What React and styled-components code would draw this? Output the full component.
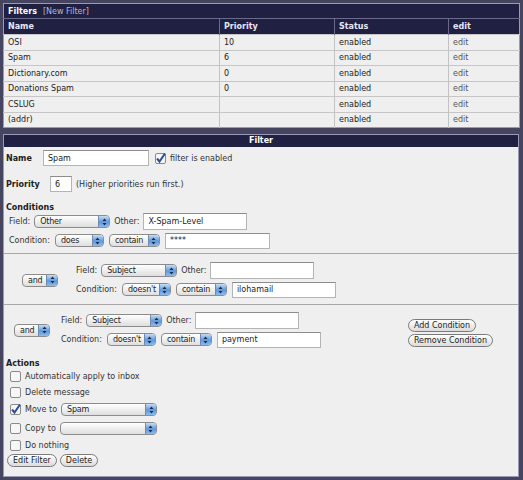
import React from 'react';
import styled, { createGlobalStyle } from 'styled-components';

const Global = createGlobalStyle`
  html, body { margin: 0; padding: 0; background: #46455f; }
  body { font-family: "DejaVu Sans", Verdana, sans-serif; font-size: 8px; color: #222; }
  #root { padding: 3px 4px 3px 3px; }
`;

const Table = styled.table`
  width: 516px;
  border-collapse: collapse;
  border: 1px solid #9a9ab8;
  background: #efefef;
  table-layout: fixed;
`;

const Caption = styled.th`
  background: #1f2042;
  color: #fff;
  text-align: left;
  font-weight: bold;
  height: 14px;
  padding: 0 4px;
  span { font-weight: normal; color: #b8b8d4; margin-left: 6px; }
`;

const HeadCell = styled.th`
  background: #1f2042;
  color: #e8e8f4;
  text-align: left;
  font-weight: bold;
  height: 15px;
  padding: 0 4px;
  border-left: 1px solid #6a6a8c;
  border-top: 1px solid #6a6a8c;
  &:first-child { border-left: none; }
`;

const Cell = styled.td`
  height: 14.5px;
  padding: 0 4px;
  border-top: 1px solid #c6c6c6;
  border-left: 1px solid #c2c2c2;
  color: ${p => (p.$muted ? '#555' : '#222')};
  &:first-child { border-left: none; }
`;

const Panel = styled.div`
  margin-top: 6px;
  width: 514px;
  height: 341px;
  border: 1px solid #9a9ab8;
  background: #efefef;
  display: flex;
  flex-direction: column;
`;

const PanelHead = styled.div`
  background: #1f2042;
  color: #fff;
  font-weight: bold;
  text-align: center;
  height: 12px;
  line-height: 12px;
`;

const Row = styled.div`
  display: flex;
  align-items: center;
  gap: ${p => p.$gap ?? 4}px;
  margin-top: ${p => p.$top ?? 0}px;
  padding-left: ${p => p.$left ?? 0}px;
  height: ${p => p.$h ?? 17}px;
`;

const Bold = styled.span`
  font-weight: bold;
  width: ${p => (p.$w ? `${p.$w}px` : 'auto')};
`;

const Label = styled.span`
  color: #333;
  white-space: nowrap;
`;

const Input = styled.div`
  box-sizing: border-box;
  width: ${p => p.$w}px;
  height: ${p => p.$h ?? 17}px;
  background: #fff;
  border: 1px solid #b4b4b4;
  border-top-color: #8c8c8c;
  padding: 0 4px;
  display: flex;
  align-items: center;
  color: #222;
`;

const SelBox = styled.div`
  box-sizing: border-box;
  position: relative;
  width: ${p => p.$w}px;
  height: 13px;
  border: 1px solid #8c8c8c;
  border-radius: 4px;
  background: linear-gradient(#ffffff, #dedede);
  padding-left: 5px;
  display: flex;
  align-items: center;
  color: #222;
  letter-spacing: -0.2px;
  overflow: hidden;
  white-space: nowrap;
`;

const Arrow = styled.div`
  position: absolute;
  right: 0;
  top: 0;
  bottom: 0;
  width: 10px;
  background: linear-gradient(#c6dcf4, #5f98da 55%, #8cbcee);
  border-left: 1px solid #6c8cb8;
  display: flex;
  align-items: center;
  justify-content: center;
`;

const Select = ({ w, children }) => (
  <SelBox $w={w}>
    {children}
    <Arrow>
      <svg width="5" height="8" viewBox="0 0 5 8">
        <path d="M2.5 0.5 L4.5 3 L0.5 3 Z M2.5 7.5 L4.5 5 L0.5 5 Z" fill="#1c2c4c" />
      </svg>
    </Arrow>
  </SelBox>
);

const BoxWrap = styled.div`
  width: 11px;
  height: 11px;
  flex: none;
`;

const Check = ({ on }) => (
  <BoxWrap>
    <svg width="11" height="11" viewBox="0 0 11 11">
      <rect x="0.5" y="0.5" width="10" height="10" rx="1.5" fill="#f6f6f6" stroke="#8a8a8a" />
      {on && <path d="M2 5.5 L4.5 8.5 L10 0.5" fill="none" stroke="#2a4e9c" strokeWidth="2" />}
    </svg>
  </BoxWrap>
);

const Button = styled.div`
  box-sizing: border-box;
  height: 13px;
  padding: 0 5px;
  border: 1px solid #7a7a7a;
  border-radius: 7px;
  background: linear-gradient(#ffffff, #dcdcdc);
  display: inline-flex;
  align-items: center;
  color: #222;
  white-space: nowrap;
`;

const Sep = styled.div`
  border-top: 1px solid #a8a8a8;
  margin-top: ${p => p.$top}px;
`;

const Block = styled.div`
  display: flex;
  align-items: center;
  padding-left: ${p => p.$left}px;
  margin-top: ${p => p.$top}px;
`;

const Fields = styled.div`
  display: flex;
  flex-direction: column;
  margin-left: ${p => p.$left}px;
  gap: 2px;
`;

const Side = styled.div`
  display: flex;
  flex-direction: column;
  gap: 2px;
  margin-left: ${p => p.$left}px;
  margin-top: 5px;
`;

const ActionRow = styled.div`
  display: flex;
  align-items: center;
  gap: 4px;
  padding-left: 6px;
  height: ${p => p.$h}px;
`;

const rows = [
  ['OSI', '10'],
  ['Spam', '6'],
  ['Dictionary.com', '0'],
  ['Donations Spam', '0'],
  ['CSLUG', ''],
  ['(addr)', ''],
];

const Condition = ({ field, other, neg, value, otherW, valueW }) => (
  <>
    <Row $gap={4}>
      <Label>Field:</Label>
      <Select w={76}>{field}</Select>
      <Label>Other:</Label>
      <Input $w={otherW}>{other}</Input>
    </Row>
    <Row $gap={5}>
      <Label>Condition:</Label>
      <Select w={49}>{neg}</Select>
      <Select w={51}>contain</Select>
      <Input $w={valueW} $h={16}>{value}</Input>
    </Row>
  </>
);

export default function App() {
  return (
    <>
      <Global />
      <Table>
        <colgroup>
          <col style={{ width: 216 }} />
          <col style={{ width: 115 }} />
          <col style={{ width: 114 }} />
          <col style={{ width: 71 }} />
        </colgroup>
        <thead>
          <tr>
            <Caption colSpan={4}>
              Filters<span>[New Filter]</span>
            </Caption>
          </tr>
          <tr>
            <HeadCell>Name</HeadCell>
            <HeadCell>Priority</HeadCell>
            <HeadCell>Status</HeadCell>
            <HeadCell>edit</HeadCell>
          </tr>
        </thead>
        <tbody>
          {rows.map(([name, pr]) => (
            <tr key={name}>
              <Cell>{name}</Cell>
              <Cell>{pr}</Cell>
              <Cell>enabled</Cell>
              <Cell $muted>edit</Cell>
            </tr>
          ))}
        </tbody>
      </Table>

      <Panel>
        <PanelHead>Filter</PanelHead>
        <Row $top={3} $left={2} $h={16} $gap={0}>
          <Bold $w={37}>Name</Bold>
          <Input $w={106} $h={16}>Spam</Input>
          <Row $left={6} $gap={4} $h={16}>
            <Check on />
            <Label>filter is enabled</Label>
          </Row>
        </Row>
        <Row $top={10} $left={2} $h={16} $gap={0}>
          <Bold $w={44}>Priority</Bold>
          <Input $w={22} $h={16}>6</Input>
          <Label style={{ marginLeft: 4 }}>(Higher priorities run first.)</Label>
        </Row>
        <Row $top={10} $left={2} $h={11}>
          <Bold>Conditions</Bold>
        </Row>
        <Fields $left={5}>
          <Condition field="Other" other="X-Spam-Level" neg="does" value="****" otherW={104} valueW={105} />
        </Fields>
        <Sep $top={4} />
        <Block $left={18} $top={8}>
          <Select w={36}>and</Select>
          <Fields $left={18}>
            <Condition field="Subject" other="" neg="doesn't" value="ilohamail" otherW={104} valueW={104} />
          </Fields>
        </Block>
        <Sep $top={6} />
        <Block $left={10} $top={7}>
          <Select w={36}>and</Select>
          <Fields $left={11}>
            <Condition field="Subject" other="" neg="doesn't" value="payment" otherW={104} valueW={104} />
          </Fields>
          <Side $left={87}>
            <div><Button>Add Condition</Button></div>
            <div><Button>Remove Condition</Button></div>
          </Side>
        </Block>
        <Row $top={11} $left={2} $h={9}>
          <Bold>Actions</Bold>
        </Row>
        <ActionRow $h={16}><Check /><Label>Automatically apply to inbox</Label></ActionRow>
        <ActionRow $h={16}><Check /><Label>Delete message</Label></ActionRow>
        <ActionRow $h={19}>
          <Check on />
          <Label>Move to</Label>
          <Select w={96}>Spam</Select>
        </ActionRow>
        <ActionRow $h={19}>
          <Check />
          <Label>Copy to</Label>
          <Select w={97}></Select>
        </ActionRow>
        <ActionRow $h={14}><Check /><Label>Do nothing</Label></ActionRow>
        <Row $top={1} $left={3} $gap={3} $h={14}>
          <Button>Edit Filter</Button>
          <Button>Delete</Button>
        </Row>
      </Panel>
    </>
  );
}
